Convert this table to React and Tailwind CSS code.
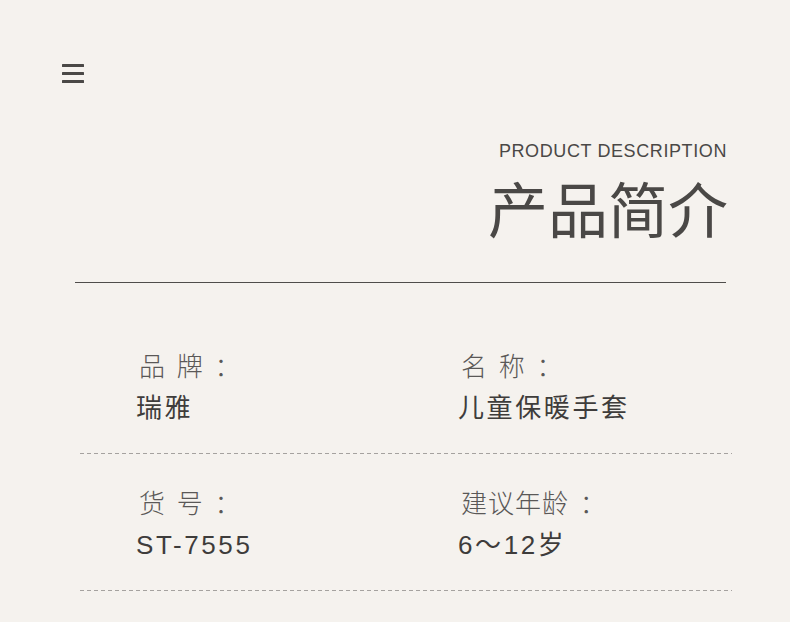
import React from 'react';

const cjk = { fontFamily: '"Noto Sans CJK SC", "Noto Sans", sans-serif' };

const rows = [
  [
    { label: '品 牌 ：', value: '瑞雅' },
    { label: '名 称 ：', value: '儿童保暖手套' },
  ],
  [
    { label: '货 号 ：', value: 'ST-7555' },
    { label: '建议年龄 ：', value: '6～12岁' },
  ],
];

const Hamburger = () => (
  <svg width="22" height="21" viewBox="0 0 22 21" className="block">
    <rect x="0" y="1" width="22" height="3" rx="0.5" fill="#4a4846" />
    <rect x="0" y="9" width="22" height="3" rx="0.5" fill="#4a4846" />
    <rect x="0" y="17" width="22" height="3" rx="0.5" fill="#4a4846" />
  </svg>
);

const Dashed = () => (
  <div className="ml-[80px] w-[652px] h-px bg-[repeating-linear-gradient(90deg,#a5a29f_0_4px,transparent_4px_7px)]" />
);

export default function App() {
  return (
    <div className="w-full min-h-[622px] bg-[#f5f2ee] overflow-hidden" style={cjk}>
      <div className="pt-[63px] pl-[62px]">
        <Hamburger />
      </div>

      {/* Heading */}
      <div className="pr-[62px] text-right">
        <div className="mt-[58px] mr-[1px] text-[18px] leading-[18px] tracking-[0.6px] text-[#4a4846] font-['Liberation_Sans',sans-serif]">
          PRODUCT DESCRIPTION
        </div>
        <div className="mt-[17px] text-[60px] leading-[60px] text-[#4a4846]">产品简介</div>
      </div>

      <div className="mt-[45px] ml-[75px] w-[651px] h-px bg-[#4f4d4b]" />

      {/* Details */}
      <div className="pt-[69px]">
        {rows.map((row, i) => (
          <div key={i} className={i > 0 ? 'mt-[35px]' : ''}>
            <div className="ml-[136px] grid grid-cols-[322px_1fr]">
              {row.map((cell) => (
                <div key={cell.label}>
                  <div className="pl-[3px] text-[26px] leading-[26px] tracking-[1px] [word-spacing:4px] text-[#5a5857] font-light whitespace-pre">
                    {cell.label}
                  </div>
                  <div className="mt-[17px] text-[26px] leading-[27px] tracking-[2.6px] text-[#3e3c3b] font-['Liberation_Sans','Noto_Sans_CJK_SC',sans-serif]">
                    {cell.value}
                  </div>
                </div>
              ))}
            </div>
            <div className="mt-[31px]">
              <Dashed />
            </div>
          </div>
        ))}
      </div>
    </div>
  );
}
